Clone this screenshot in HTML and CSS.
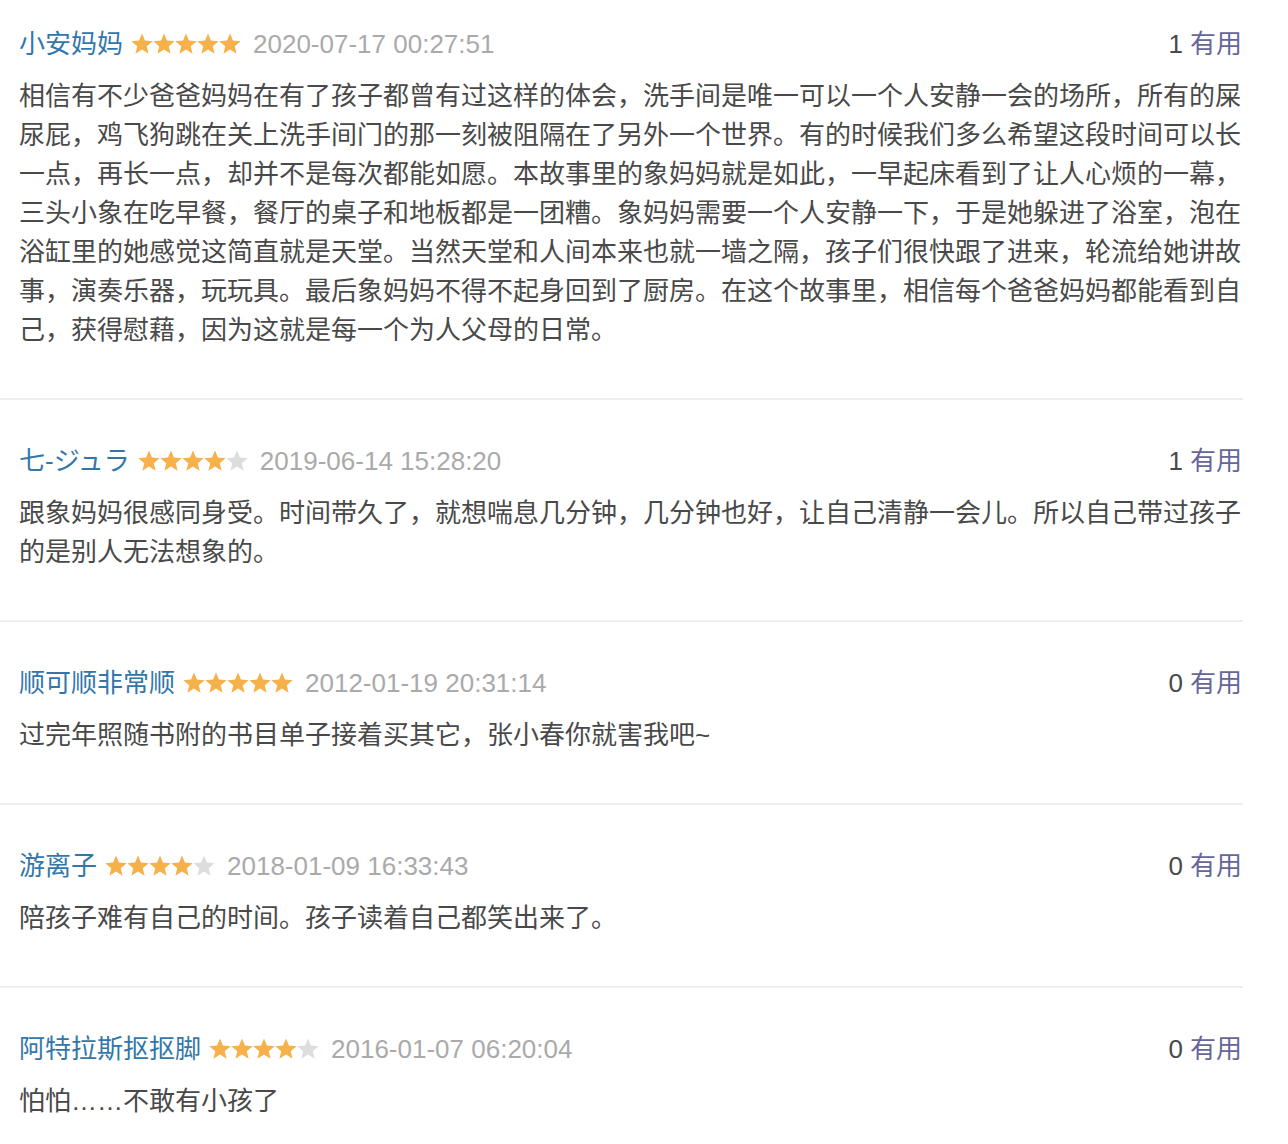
FILE: index.html
```html
<!DOCTYPE html>
<html lang="zh-CN">
<head>
<meta charset="utf-8">
<title>短评</title>
<link rel="stylesheet" href="styles.css">
</head>
<body>
<div class="comments">
  <div class="item first">
    <div class="head">
      <div class="info">
        <a class="name">小安妈妈</a>
        <span class="stars">
          <svg class="star on" viewBox="0 0 22 22"><polygon points="11,0.4 13.94,7.55 21.65,8.14 15.76,13.15 17.58,20.66 11,16.6 4.42,20.66 6.24,13.15 0.35,8.14 8.06,7.55"/></svg>
          <svg class="star on" viewBox="0 0 22 22"><polygon points="11,0.4 13.94,7.55 21.65,8.14 15.76,13.15 17.58,20.66 11,16.6 4.42,20.66 6.24,13.15 0.35,8.14 8.06,7.55"/></svg>
          <svg class="star on" viewBox="0 0 22 22"><polygon points="11,0.4 13.94,7.55 21.65,8.14 15.76,13.15 17.58,20.66 11,16.6 4.42,20.66 6.24,13.15 0.35,8.14 8.06,7.55"/></svg>
          <svg class="star on" viewBox="0 0 22 22"><polygon points="11,0.4 13.94,7.55 21.65,8.14 15.76,13.15 17.58,20.66 11,16.6 4.42,20.66 6.24,13.15 0.35,8.14 8.06,7.55"/></svg>
          <svg class="star on" viewBox="0 0 22 22"><polygon points="11,0.4 13.94,7.55 21.65,8.14 15.76,13.15 17.58,20.66 11,16.6 4.42,20.66 6.24,13.15 0.35,8.14 8.06,7.55"/></svg>
        </span>
        <span class="time">2020-07-17 00:27:51</span>
      </div>
      <div class="vote"><span class="count">1</span><a class="useful">有用</a></div>
    </div>
    <p class="text">相信有不少爸爸妈妈在有了孩子都曾有过这样的体会，洗手间是唯一可以一个人安静一会的场所，所有的屎尿屁，鸡飞狗跳在关上洗手间门的那一刻被阻隔在了另外一个世界。有的时候我们多么希望这段时间可以长一点，再长一点，却并不是每次都能如愿。本故事里的象妈妈就是如此，一早起床看到了让人心烦的一幕，三头小象在吃早餐，餐厅的桌子和地板都是一团糟。象妈妈需要一个人安静一下，于是她躲进了浴室，泡在浴缸里的她感觉这简直就是天堂。当然天堂和人间本来也就一墙之隔，孩子们很快跟了进来，轮流给她讲故事，演奏乐器，玩玩具。最后象妈妈不得不起身回到了厨房。在这个故事里，相信每个爸爸妈妈都能看到自己，获得慰藉，因为这就是每一个为人父母的日常。</p>
  </div>

  <div class="item">
    <div class="head">
      <div class="info">
        <a class="name">七-ジュラ</a>
        <span class="stars">
          <svg class="star on" viewBox="0 0 22 22"><polygon points="11,0.4 13.94,7.55 21.65,8.14 15.76,13.15 17.58,20.66 11,16.6 4.42,20.66 6.24,13.15 0.35,8.14 8.06,7.55"/></svg>
          <svg class="star on" viewBox="0 0 22 22"><polygon points="11,0.4 13.94,7.55 21.65,8.14 15.76,13.15 17.58,20.66 11,16.6 4.42,20.66 6.24,13.15 0.35,8.14 8.06,7.55"/></svg>
          <svg class="star on" viewBox="0 0 22 22"><polygon points="11,0.4 13.94,7.55 21.65,8.14 15.76,13.15 17.58,20.66 11,16.6 4.42,20.66 6.24,13.15 0.35,8.14 8.06,7.55"/></svg>
          <svg class="star on" viewBox="0 0 22 22"><polygon points="11,0.4 13.94,7.55 21.65,8.14 15.76,13.15 17.58,20.66 11,16.6 4.42,20.66 6.24,13.15 0.35,8.14 8.06,7.55"/></svg>
          <svg class="star off" viewBox="0 0 22 22"><polygon points="11,0.4 13.94,7.55 21.65,8.14 15.76,13.15 17.58,20.66 11,16.6 4.42,20.66 6.24,13.15 0.35,8.14 8.06,7.55"/></svg>
        </span>
        <span class="time">2019-06-14 15:28:20</span>
      </div>
      <div class="vote"><span class="count">1</span><a class="useful">有用</a></div>
    </div>
    <p class="text">跟象妈妈很感同身受。时间带久了，就想喘息几分钟，几分钟也好，让自己清静一会儿。所以自己带过孩子的是别人无法想象的。</p>
  </div>

  <div class="item">
    <div class="head">
      <div class="info">
        <a class="name">顺可顺非常顺</a>
        <span class="stars">
          <svg class="star on" viewBox="0 0 22 22"><polygon points="11,0.4 13.94,7.55 21.65,8.14 15.76,13.15 17.58,20.66 11,16.6 4.42,20.66 6.24,13.15 0.35,8.14 8.06,7.55"/></svg>
          <svg class="star on" viewBox="0 0 22 22"><polygon points="11,0.4 13.94,7.55 21.65,8.14 15.76,13.15 17.58,20.66 11,16.6 4.42,20.66 6.24,13.15 0.35,8.14 8.06,7.55"/></svg>
          <svg class="star on" viewBox="0 0 22 22"><polygon points="11,0.4 13.94,7.55 21.65,8.14 15.76,13.15 17.58,20.66 11,16.6 4.42,20.66 6.24,13.15 0.35,8.14 8.06,7.55"/></svg>
          <svg class="star on" viewBox="0 0 22 22"><polygon points="11,0.4 13.94,7.55 21.65,8.14 15.76,13.15 17.58,20.66 11,16.6 4.42,20.66 6.24,13.15 0.35,8.14 8.06,7.55"/></svg>
          <svg class="star on" viewBox="0 0 22 22"><polygon points="11,0.4 13.94,7.55 21.65,8.14 15.76,13.15 17.58,20.66 11,16.6 4.42,20.66 6.24,13.15 0.35,8.14 8.06,7.55"/></svg>
        </span>
        <span class="time">2012-01-19 20:31:14</span>
      </div>
      <div class="vote"><span class="count">0</span><a class="useful">有用</a></div>
    </div>
    <p class="text">过完年照随书附的书目单子接着买其它，张小春你就害我吧~</p>
  </div>

  <div class="item">
    <div class="head">
      <div class="info">
        <a class="name">游离子</a>
        <span class="stars">
          <svg class="star on" viewBox="0 0 22 22"><polygon points="11,0.4 13.94,7.55 21.65,8.14 15.76,13.15 17.58,20.66 11,16.6 4.42,20.66 6.24,13.15 0.35,8.14 8.06,7.55"/></svg>
          <svg class="star on" viewBox="0 0 22 22"><polygon points="11,0.4 13.94,7.55 21.65,8.14 15.76,13.15 17.58,20.66 11,16.6 4.42,20.66 6.24,13.15 0.35,8.14 8.06,7.55"/></svg>
          <svg class="star on" viewBox="0 0 22 22"><polygon points="11,0.4 13.94,7.55 21.65,8.14 15.76,13.15 17.58,20.66 11,16.6 4.42,20.66 6.24,13.15 0.35,8.14 8.06,7.55"/></svg>
          <svg class="star on" viewBox="0 0 22 22"><polygon points="11,0.4 13.94,7.55 21.65,8.14 15.76,13.15 17.58,20.66 11,16.6 4.42,20.66 6.24,13.15 0.35,8.14 8.06,7.55"/></svg>
          <svg class="star off" viewBox="0 0 22 22"><polygon points="11,0.4 13.94,7.55 21.65,8.14 15.76,13.15 17.58,20.66 11,16.6 4.42,20.66 6.24,13.15 0.35,8.14 8.06,7.55"/></svg>
        </span>
        <span class="time">2018-01-09 16:33:43</span>
      </div>
      <div class="vote"><span class="count">0</span><a class="useful">有用</a></div>
    </div>
    <p class="text">陪孩子难有自己的时间。孩子读着自己都笑出来了。</p>
  </div>

  <div class="item">
    <div class="head">
      <div class="info">
        <a class="name">阿特拉斯抠抠脚</a>
        <span class="stars">
          <svg class="star on" viewBox="0 0 22 22"><polygon points="11,0.4 13.94,7.55 21.65,8.14 15.76,13.15 17.58,20.66 11,16.6 4.42,20.66 6.24,13.15 0.35,8.14 8.06,7.55"/></svg>
          <svg class="star on" viewBox="0 0 22 22"><polygon points="11,0.4 13.94,7.55 21.65,8.14 15.76,13.15 17.58,20.66 11,16.6 4.42,20.66 6.24,13.15 0.35,8.14 8.06,7.55"/></svg>
          <svg class="star on" viewBox="0 0 22 22"><polygon points="11,0.4 13.94,7.55 21.65,8.14 15.76,13.15 17.58,20.66 11,16.6 4.42,20.66 6.24,13.15 0.35,8.14 8.06,7.55"/></svg>
          <svg class="star on" viewBox="0 0 22 22"><polygon points="11,0.4 13.94,7.55 21.65,8.14 15.76,13.15 17.58,20.66 11,16.6 4.42,20.66 6.24,13.15 0.35,8.14 8.06,7.55"/></svg>
          <svg class="star off" viewBox="0 0 22 22"><polygon points="11,0.4 13.94,7.55 21.65,8.14 15.76,13.15 17.58,20.66 11,16.6 4.42,20.66 6.24,13.15 0.35,8.14 8.06,7.55"/></svg>
        </span>
        <span class="time">2016-01-07 06:20:04</span>
      </div>
      <div class="vote"><span class="count">0</span><a class="useful">有用</a></div>
    </div>
    <p class="text">怕怕……不敢有小孩了</p>
  </div>
</div>
</body>
</html>
```
FILE: styles.css
```css
html, body {
  margin: 0;
  padding: 0;
  background: #fff;
}

body {
  font-family: "Liberation Sans", "Noto Sans CJK SC", sans-serif;
  font-size: 26px;
  color: #494949;
}

.comments {
  width: 1243px;
}

.item {
  padding: 42px 0 48px 19px;
  border-bottom: 2px solid #eeeeee;
}

.item.first {
  padding-top: 25px;
}

.head {
  display: flex;
  justify-content: space-between;
  align-items: center;
  height: 39px;
  line-height: 39px;
  padding-right: 1px;
}

.info {
  display: flex;
  align-items: center;
}

.name {
  color: #3377aa;
  text-decoration: none;
}

.stars {
  display: flex;
  margin-left: 8px;
  margin-top: -2px;
}

.star {
  width: 22px;
  height: 22px;
  display: block;
}

.star.on polygon {
  fill: #f6b14b;
}

.star.off polygon {
  fill: #dddddd;
}

.time {
  color: #aaaaaa;
  margin-left: 12px;
}

.vote {
  display: flex;
  align-items: center;
  gap: 7px;
}

.count {
  color: #494949;
}

.useful {
  color: #666699;
  text-decoration: none;
}

.text {
  margin: 13px 0 0 0;
  padding-right: 1px;
  line-height: 39px;
  word-break: break-all;
}
```
